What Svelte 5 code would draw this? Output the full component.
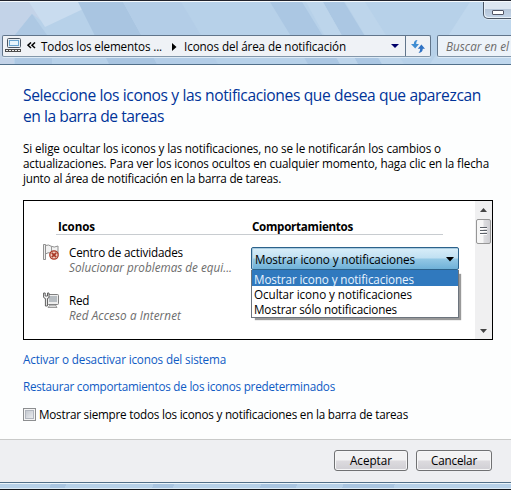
<script>
  const title = [
    ['Seleccione los iconos y las notificaciones que desea que aparezcan', 458],
    ['en la barra de tareas', 141]
  ];
  const intro = [
    ['Si elige ocultar los iconos y las notificaciones, no se le notificarán los cambios o', 418],
    ['actualizaciones. Para ver los iconos ocultos en cualquier momento, haga clic en la flecha', 466],
    ['junto al área de notificación en la barra de tareas.', 258]
  ];
  const options = [
    ['Mostrar icono y notificaciones', 160],
    ['Ocultar icono y notificaciones', 158],
    ['Mostrar sólo notificaciones', 143]
  ];
  let selected = $state(0);

  // Spreads the letters of a single line so that it takes the given width.
  function fit(node, width) {
    const natural = node.getBoundingClientRect().width;
    node.style.letterSpacing = (width - natural) / node.textContent.length + 'px';
  }
</script>

{#snippet line(text, width)}<span class="line" use:fit={width}>{text}</span>{/snippet}

<div class="window">
  <header>
    <svg class="glass" width="511" height="62" viewBox="0 0 511 62">
      <rect width="511" height="62" fill="#b7d1e9" />
      <path d="M0 0H68L43 20L32 12L14 34V62H0Z" fill="#c3d3e8" />
      <path d="M29 0H98L45 25Z" fill="#c9dcef" />
      <path d="M15 33L32 12L52 40V62H15Z" fill="#adc8e3" />
      <path d="M78 0H123L157 62H109Z" fill="#a9c5e1" />
      <path d="M123 0H181L218 62H157Z" fill="#b3cde7" />
      <path d="M270 0H302L340 62H308Z" fill="#abc7e3" />
      <path d="M323 0H344L382 62H358Z" fill="#abc7e3" />
      <path d="M306 0H323L358 62H340Z" fill="#bdd5eb" />
      <path d="M345 0H365L404 62H382Z" fill="#bdd5eb" />
      <path d="M470 0H511V62H430Z" fill="#bfd7ed" />
    </svg>
    <div class="minimize"><i></i></div>
    <div class="nav">
      <div class="address">
        <svg class="pc" width="17" height="16" viewBox="0 0 17 16">
          <rect x="2.5" y=".5" width="13" height="9" rx="1" fill="#e5edf4" stroke="#4b5663" />
          <rect x="4.5" y="2.5" width="9" height="5" fill="#e6f4fc" stroke="#68a4d0" />
          <path d="M0 11H16V14H0Z" fill="#4c4c4c" />
          <path d="M1 12.5H16" stroke="#eee" stroke-width="1" stroke-dasharray="2 1" />
        </svg>
        <svg class="back" width="9" height="7" viewBox="0 0 9 7" fill="none" stroke="#000" stroke-width="1.5">
          <path d="M4 .5L1 3.2L4 6M8 .5L5 3.2L8 6" />
        </svg>
        <span class="crumb">{@render line('Todos los elementos ...', 121)}</span>
        <svg class="arrow" width="5" height="8" viewBox="0 0 5 8"><path d="M0 0L4.5 4L0 8Z" /></svg>
        <span class="crumb">{@render line('Iconos del área de notificación', 162)}</span>
        <svg class="drop" width="8" height="4" viewBox="0 0 8 4"><path d="M0 0H8L4 4Z" fill="#00006a" /></svg>
        <div class="refresh">
          <svg width="15" height="13" viewBox="0 0 15 13" fill="#2f72c4">
            <path d="M6.5 0Q3 .2 2.8 4H0L4.2 8.5L8 4H5.2Q5 1.8 6.5 0Z" fill="#3f8dd2" />
            <path d="M7.5 13Q11.7 12.5 11.8 8.8H14L10.4 4.4L6.8 8.8H9.2Q9.3 11.5 7.5 13Z" />
          </svg>
        </div>
      </div>
      <div class="search"><em>{@render line('Buscar en el', 63)}</em></div>
    </div>
  </header>

  <main>
    <h1>
      {#each title as [text, width]}{@render line(text, width)}{/each}
    </h1>
    <p class="intro">
      {#each intro as [text, width]}{@render line(text, width)}{/each}
    </p>

    <section class="list">
      <div class="rows">
        <div class="head">
          <b>{@render line('Iconos', 37)}</b>
          <b>{@render line('Comportamientos', 101)}</b>
        </div>
        <div class="row">
          <svg width="17" height="17" viewBox="0 0 17 17">
            <path d="M.5 .5H2.5V15.5H.5Z" fill="#eee" stroke="#777" stroke-width=".8" />
            <path d="M2.5 1.5Q6 .2 8 2.2Q11 4 15 2V10Q11 11 8 9Q5 8 2.5 10Z" fill="#f2f2f2" stroke="#909090" />
            <path d="M8.5 2.5V8" stroke="#999" />
            <circle cx="11" cy="11" r="4.2" fill="#f1d1c4" stroke="#a93826" stroke-width="1.3" />
            <path d="M8.8 8.8L13.2 13.2M13.2 8.8L8.8 13.2" stroke="#a93826" stroke-width="1.7" />
          </svg>
          <div class="name">
            {@render line('Centro de actividades', 114)}
            <em>{@render line('Solucionar problemas de equi...', 163)}</em>
          </div>
          <div class="combo">
            <div class="value">
              {@render line(options[selected][0], 160)}
              <svg width="8" height="5" viewBox="0 0 8 5"><path d="M0 0H8L4 4.5Z" /></svg>
            </div>
            <div class="menu">
              {#each options as [text, width], i}
                <div class="option" class:active={i === selected}>{@render line(text, width)}</div>
              {/each}
            </div>
          </div>
        </div>
        <div class="row">
          <svg width="17" height="17" viewBox="0 0 17 17">
            <rect x="4.5" y="2.5" width="11" height="10" rx="1" fill="#eee" stroke="#818181" />
            <path d="M6 4H14V10H6Z" fill="#b7bdc2" />
            <path d="M5 15.5H14L12.5 13H7Z" fill="#ddd" stroke="#888" stroke-width=".8" />
            <path d="M.6 1V5Q1 6.5 2.4 6.5V14H4.4V6.5Q6 6.4 6 5V1H4.5V4H2.2V1Z" fill="#f6f6f6" stroke="#5f5f5f" />
          </svg>
          <div class="name">
            {@render line('Red', 20)}
            <em>{@render line('Red Acceso a Internet', 112)}</em>
          </div>
        </div>
      </div>
      <div class="scroll">
        <svg width="7" height="4" viewBox="0 0 7 4"><path d="M0 4L3.5 0L7 4Z" fill="#444" /></svg>
        <div class="thumb"><i></i><i></i><i></i></div>
        <svg class="down" width="7" height="4" viewBox="0 0 7 4"><path d="M0 0H7L3.5 4Z" fill="#444" /></svg>
      </div>
    </section>

    <a href="#sistema">{@render line('Activar o desactivar iconos del sistema', 203)}</a>
    <a href="#restaurar">{@render line('Restaurar comportamientos de los iconos predeterminados', 312)}</a>
    <div class="check">
      <span class="box"></span>
      {@render line('Mostrar siempre todos los iconos y notificaciones en la barra de tareas', 369)}
    </div>
  </main>

  <footer>
    <button>{@render line('Aceptar', 42)}</button>
    <button class="cancel">{@render line('Cancelar', 46)}</button>
  </footer>
  <div class="edge"></div>
</div>

<style>
  .window {
    width: 511px;
    height: 490px;
    box-sizing: border-box;
    display: flex;
    flex-direction: column;
    overflow: hidden;
    border-top: 1px solid #20222c;
    font: 11.7px/15px 'Open Sans', 'Noto Sans', sans-serif;
    color: #000;
    background: #fff;
  }
  .line {
    display: block;
    width: max-content;
    white-space: pre;
  }
  header {
    position: relative;
    height: 64px;
    box-sizing: border-box;
    flex: none;
    border-top: 1px solid #f6fafd;
    border-bottom: 1px solid #52708a;
    overflow: hidden;
  }
  .glass {
    position: absolute;
    left: 0;
    top: 0;
  }
  .minimize {
    position: absolute;
    left: 483px;
    top: -1px;
    width: 40px;
    height: 17px;
    border: 1px solid #4b5664;
    border-top: 0;
    border-radius: 0 0 0 5px;
    background: linear-gradient(#dce6f1 0 45%, #b6c6d9 50%, #c4d5e8);
    box-shadow: inset 1px -1px #e7eff7, 0 1px #dce9f5;
  }
  .minimize i {
    position: absolute;
    left: 8px;
    top: 9px;
    width: 10px;
    height: 3px;
    border: 1px solid #535666;
    border-radius: 1px;
    background: #fff;
  }
  .nav {
    position: relative;
    display: flex;
    padding: 33px 0 0 2px;
    gap: 6px;
  }
  .address {
    display: flex;
    align-items: center;
    width: 429px;
    height: 22px;
    box-sizing: border-box;
    border: 1px solid #61758b;
    border-bottom-color: #8397aa;
    border-radius: 2px;
    background: #eff2f6;
    box-shadow: 0 1px #dceaf6;
    padding-left: 2px;
    flex: none;
  }
  .pc {
    margin: 0 5px 0 0;
  }
  .back {
    margin-right: 5px;
    margin-top: -2px;
  }
  .crumb {
    padding-top: 1px;
  }
  .arrow {
    margin: 1px 7px 0 10px;
  }
  .drop {
    margin-left: auto;
    margin-right: 6px;
  }
  .refresh {
    width: 24px;
    height: 20px;
    border-left: 1px solid #61758b;
    display: flex;
    align-items: center;
    justify-content: center;
  }
  .search {
    width: 90px;
    height: 22px;
    box-sizing: border-box;
    flex: none;
    border: 1px solid #61758b;
    border-bottom-color: #8397aa;
    border-radius: 2px;
    padding: 3px 0 0 8px;
    background: #edf3f9;
    box-shadow: 0 1px #dceaf6;
  }
  main {
    height: 374px;
    flex: none;
    box-sizing: border-box;
    padding: 20px 18px 0 23px;
    background: #fdfefe;
  }
  h1 {
    margin: 0;
    font-size: 15.6px;
    line-height: 21px;
    font-weight: 400;
    color: #003399;
  }
  .intro {
    margin: 14px 0 0;
  }
  .list {
    display: flex;
    width: 470px;
    height: 140px;
    box-sizing: border-box;
    margin-top: 14px;
    border: 1px solid #000;
    background: #fff;
  }
  .rows {
    flex: 1;
    padding: 18px 0 0 19px;
  }
  .head {
    display: grid;
    grid-template-columns: 194px 1fr;
    width: 387px;
    height: 16px;
    box-sizing: border-box;
    margin-left: 13px;
    padding-left: 2px;
    border-bottom: 1px solid #c8ccd0;
  }
  .head b {
    font-weight: 700;
    font-size: 11.6px;
  }
  .row {
    display: flex;
    height: 48px;
    box-sizing: border-box;
    padding-top: 9px;
  }
  .row > svg {
    flex: none;
  }
  .name {
    width: 182px;
    margin-left: 9px;
    flex: none;
    margin-top: 1px;
  }
  em {
    color: #6d6d6d;
    font-style: italic;
  }
  .combo {
    position: relative;
    width: 208px;
    flex: none;
    margin-top: 3px;
  }
  .value {
    display: flex;
    align-items: center;
    justify-content: space-between;
    height: 23px;
    box-sizing: border-box;
    border: 1px solid #2c628b;
    border-radius: 2px;
    padding: 1px 4px 0 3px;
    background: linear-gradient(#d9eef9 0, #c0e0f2 48%, #93c8e5 52%, #6fb1d8);
    box-shadow: inset 1px 1px #a8cbe0;
  }
  .menu {
    position: absolute;
    left: 0;
    top: 23px;
    width: 208px;
    box-sizing: border-box;
    border: 1px solid #6c747d;
    border-top: 0;
    background: #fff;
    box-shadow: 3px 3px 1px -1px #999;
  }
  .option {
    height: 15px;
    box-sizing: border-box;
    padding: 1px 0 0 2px;
  }
  .option:last-child {
    height: 16px;
  }
  .option.active {
    height: 16px;
    padding-top: 2px;
    background: #3079be;
    color: #e7f3ff;
  }
  .scroll {
    display: flex;
    flex-direction: column;
    align-items: center;
    width: 17px;
    box-sizing: border-box;
    padding: 7px 0 6px;
    background: #f0f0f1;
  }
  .thumb {
    width: 15px;
    height: 25px;
    box-sizing: border-box;
    margin-top: 7px;
    padding-top: 7px;
    border: 1px solid #969696;
    border-radius: 2px;
    background: linear-gradient(90deg, #f6f6f6 0 45%, #dcdcdf 55%, #cfcfd3);
  }
  .thumb i {
    display: block;
    width: 7px;
    height: 1px;
    margin: 0 3px 2px;
    background: #5b6067;
    box-shadow: 0 1px #fff;
  }
  .down {
    margin-top: auto;
  }
  a {
    display: block;
    margin-top: 12px;
    color: #0f5bc4;
    text-decoration: none;
  }
  .check {
    display: flex;
    margin-top: 13px;
  }
  .box {
    width: 13px;
    height: 13px;
    box-sizing: border-box;
    margin: 1px 3px 0 0;
    border: 1px solid #8c8e90;
    background: linear-gradient(135deg, #b9bfc7, #f4f5f6);
    box-shadow: inset 0 0 0 1px #f4f4f4, inset 0 0 0 2px #b1b6be;
  }
  footer {
    display: flex;
    justify-content: flex-end;
    gap: 8px;
    height: 43px;
    flex: none;
    box-sizing: border-box;
    border-top: 1px solid #c9cac9;
    background: #eeeff2;
    padding: 10px 19px 0 0;
  }
  button {
    width: 74px;
    height: 21px;
    padding: 0;
    display: flex;
    align-items: center;
    justify-content: center;
    border: 1px solid #707173;
    border-radius: 3px;
    font: inherit;
    color: #000;
    background: linear-gradient(#f2f2f3 0 48%, #dddbdf 52%, #d0cfd4);
    box-shadow: inset 0 0 0 1px #f6f6f7;
  }
  .cancel {
    width: 76px;
  }
  .edge {
    height: 8px;
    flex: none;
    box-sizing: border-box;
    border-top: 1px solid #52708a;
    border-bottom: 1px solid #15171c;
    background: linear-gradient(110deg, #b7d1e9 0 10%, #a9c5e1 10% 13%, #b7d1e9 13% 30%, #a9c5e1 30% 34%, #b7d1e9 34% 51%, #a9c5e1 51% 58%, #b7d1e9 58% 67%, #a9c5e1 67% 77%, #b7d1e9 77%);
    box-shadow: inset 0 1px #eaf4fa, inset 0 -1px #dcebf6;
  }
</style>
